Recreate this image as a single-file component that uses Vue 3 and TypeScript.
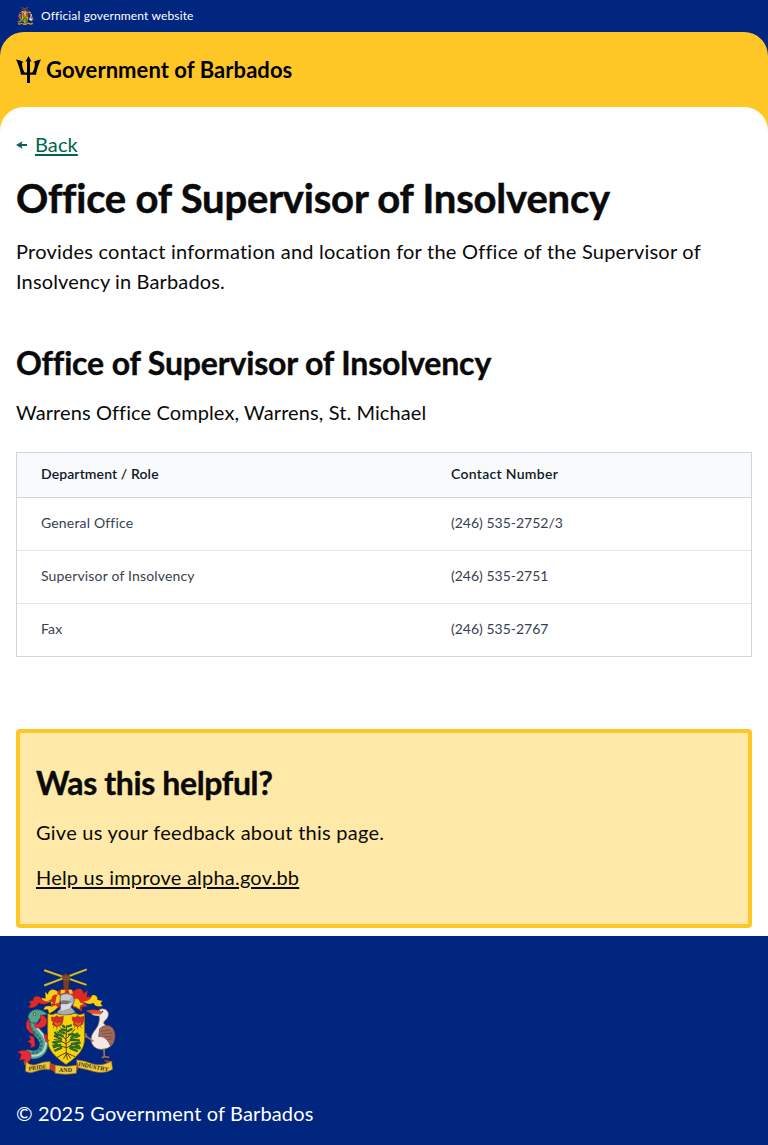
<script setup lang="ts">
interface Contact {
  role: string
  phone: string
}

const contacts: Contact[] = [
  { role: 'General Office', phone: '(246) 535-2752/3' },
  { role: 'Supervisor of Insolvency', phone: '(246) 535-2751' },
  { role: 'Fax', phone: '(246) 535-2767' },
]
</script>

<template>
  <div class="page">
    <div class="official">
      <svg class="arms-small" viewBox="24 24 302 324" aria-hidden="true"><use href="#arms" /></svg>
      <span class="official-text">Official government website</span>
    </div>

    <div class="brand-back">
      <header class="brand">
        <svg class="trident" viewBox="0 0 25 27" aria-hidden="true">
          <path d="M12.5 0 15.6 5.8 14 5.3V16.6H16.4C18.6 13 19.1 9 18.8 6.5L17.3 6.3C19.4 5 21.8 4.2 25 3.6 22.8 7.7 20.7 14.2 20 18.8H14V27H11V18.8H5C4.3 14.2 2.2 7.7 0 3.6 3.2 4.2 5.6 5 7.7 6.3L6.2 6.5C5.9 9 6.4 13 8.6 16.6H11V5.3L9.4 5.8Z" />
        </svg>
        <span class="brand-name">Government of Barbados</span>
      </header>
    </div>

    <div class="sheet-back">
      <main class="sheet">
        <nav class="back">
          <svg class="arrow" viewBox="0 0 12 8" aria-hidden="true">
            <path d="M0 4 6.4 .2 5.6 3H11V5H5.6L6.4 7.8Z" />
          </svg>
          <a class="back-link" href="#">Back</a>
        </nav>
        <h1>Office of Supervisor of Insolvency</h1>
        <p class="intro"><span class="line-a">Provides contact information and location for the Office of the Supervisor of</span><br /><span class="line-b">Insolvency in Barbados.</span></p>
        <h2 class="office">Office of Supervisor of Insolvency</h2>
        <p class="address">Warrens Office Complex, Warrens, St. Michael</p>
        <table>
          <thead>
            <tr>
              <th class="role">Department / Role</th>
              <th class="contact">Contact Number</th>
            </tr>
          </thead>
          <tbody>
            <tr v-for="c in contacts" :key="c.role">
              <td>{{ c.role }}</td>
              <td class="phone">{{ c.phone }}</td>
            </tr>
          </tbody>
        </table>
        <section class="feedback">
          <h2 class="helpful">Was this helpful?</h2>
          <p class="ask">Give us your feedback about this page.</p>
          <a class="improve" href="#">Help us improve alpha.gov.bb</a>
        </section>
      </main>
    </div>

    <footer>
      <svg class="arms-large" viewBox="24 24 302 324" role="img" aria-label="Coat of arms of Barbados">
        <g id="arms">
          <!-- crossed canes and hand -->
          <path d="M109 31 237 75M109 77 238 28" stroke="#e3bf1c" stroke-width="6" />
          <path d="M110 34 237 78M109 80 238 31" stroke="#806316" stroke-width="1" />
          <path d="M164 45q9-8 20 0l2 16-4 34h-15l-1-34z" fill="#70402a" stroke="#2d1c18" stroke-width="1.5" />
          <path d="M165 52h19M165 59h19" stroke="#a87047" stroke-width="2" />
          <!-- mantling, left side -->
          <g stroke="#6b3a12" stroke-width="0.8">
            <path d="M152 98C140 84 122 88 120 104L112 96 113 116 100 114C106 130 118 132 128 126L132 138 113 140 106 150 120 150 124 162 138 154 152 142 160 112Z" fill="#f8cf12" />
            <path d="M96 112C84 106 74 112 76 122L62 126C72 132 68 138 60 142 76 148 88 140 92 130 104 136 118 134 126 126 112 128 102 122 96 112Z" fill="#e32721" />
            <path d="M150 106C140 102 132 108 132 118L122 124 136 128 128 142 144 136 154 146 160 120Z" fill="#e32721" />
            <path d="M150 104C142 112 146 122 140 134L154 130 160 112Z" fill="#f8cf12" />
          </g>
          <!-- mantling, right side -->
          <g stroke="#6b3a12" stroke-width="0.8">
            <path d="M196 98C210 80 228 86 228 102L240 92 238 112 252 110C248 126 238 130 228 128L240 140 222 142 224 156 208 146 196 142 190 112Z" fill="#e32721" />
            <path d="M254 106C266 104 272 112 270 120L286 124C278 130 280 134 286 138 274 144 262 140 258 130 246 136 234 132 226 124 240 126 250 120 254 106Z" fill="#f8cf12" />
            <path d="M200 118C208 114 216 118 218 128L230 132 218 138 216 150 206 142 196 138Z" fill="#f8cf12" />
          </g>
          <path d="M152 92q11-6 22-2 12-4 24 2l4 10-14 5-14-5-14 5-12-5z" fill="#df241c" />
          <path d="M160 90l-2 13 12-3 4-9zM182 90l4 13 10-2-4-11z" fill="#f8cf12" />
          <!-- shield -->
          <path d="M120 162q13 7 25-1 14 7 29 0 15 7 28 0 13 8 29 1v81q0 37-56 73-56-36-56-73z" fill="#f9d20c" stroke="#846b10" stroke-width="2" />
          <!-- helmet -->
          <path d="M158 106q20-11 38 1l5 15q-2 12-12 19l15 17q-15 10-36 8-19-1-20-9 15-12 15-23-9-14-5-28z" fill="#a9adb2" stroke="#53585e" stroke-width="2" />
          <path d="M160 109q17-8 34 1l-9 11h-25z" fill="#c4c7ca" />
          <path d="M158 134l33-4 8-9-12 26-27 9z" fill="#d9dbdd" stroke="#747980" />
          <path d="M163 122l26 3-10 9-16-2z" fill="#71777d" />
          <!-- pride of Barbados flowers -->
          <g id="flower" stroke="#8f351b" stroke-width="1.5">
            <path d="M131 172l10 1 6-5 7 5 13-3-1 13-4 12-15 7-13-6 2-9-5-4z" fill="#d62c20" />
            <path d="M136 190l8-4 5 5 7-6 4 7-11 10zM139 178l7 2 7-2-7 6z" fill="#f05a28" />
            <path d="M147 199v12M139 199l-3 8M155 199l4 7" fill="none" stroke="#6f5b18" stroke-width="2" />
          </g>
          <use href="#flower" x="63" />
          <!-- bearded fig tree -->
          <g fill="none" stroke-linecap="round">
            <path d="M177 199q-4 40-1 87M177 244l-18-22-11-5M177 255l-23-13-15-1M177 265l-21-5-18 6M177 237l16-17 8-10M178 252l19-15 15-4M178 265l18-10 20 3M175 225l-11-15" stroke="#4a4414" stroke-width="3" />
            <path d="M176 280l-16 8-12 7M176 284l-8 14M176 283l3 18M177 281l12 16M177 281l17 8 8 3" stroke="#594414" stroke-width="3" />
            <path d="M171 203l-7-5M181 201l9-3M174 212l-12-2M181 215l11-6M168 222l-12-8M184 226l14-2M165 231l-18-7M191 235l18-12M160 239l-19-9M189 242l25 1M160 246l-24 3M192 254l25-4M158 258l-21 1M189 261l27 6M160 266l-18 8M188 267l20 8M149 229l-7-9M202 228l13 1M147 252l-9 11M205 257l12 9" stroke="#276b25" stroke-width="7" stroke-dasharray="7 2" />
          </g>
          <!-- dolphin -->
          <g fill="none" stroke-linecap="round">
            <path d="M78 172C52 210 110 222 108 254 107 284 82 292 60 284" stroke="#245f5b" stroke-width="27" />
            <path d="M78 172C52 210 110 222 108 254 107 284 82 292 60 284" stroke="#55a393" stroke-width="23" />
            <path d="M84 178C70 208 118 220 114 256 110 284 88 294 66 288" stroke="#c3d6d0" stroke-width="6" />
            <path d="M72 176C46 210 102 224 101 254 100 276 84 284 66 280" stroke="#2d7775" stroke-width="9" stroke-dasharray="1 11" />
          </g>
          <path d="M60 172Q64 152 84 150 104 148 118 164 112 168 104 166L112 178 96 176 88 190 68 190Z" fill="#55a393" stroke="#244f4b" stroke-width="2" />
          <g fill="#e52b35" stroke="#8a1824" stroke-width="1.5">
            <path d="M98 166l12 4 8 12-4 16-14 8-18-2-4-14 10 4 10-12z" />
            <path d="M62 178q-12 12-6 30l10 12 14 6-12-20zM78 234l-14-6 4 14-10 4 12 8-2 12 14-6zM108 228l12-4-4 12 8 8-10 4z" />
            <path d="M68 282q-12-12-26-8l-14 4 12 8-6 18 14-4 6 16q20-14 14-34z" />
          </g>
          <circle cx="80" cy="164" r="4" fill="#f6db4b" stroke="#222" stroke-width="2" />
          <!-- pelican -->
          <path d="M273 153c7-8 24-7 29 4 5 13-4 22-11 28-5 7 1 11 10 15 19 10 24 25 21 38-3 18-15 29-33 32-20 3-38-8-38-30 0-20 17-30 22-46 2-8 5-16 2-24z" fill="#f2e8e4" stroke="#776b69" stroke-width="2" />
          <path d="M239 153q18-5 38 0l7 7-9 6q-21-1-39-12z" fill="#ea4c28" stroke="#963821" stroke-width="1.5" />
          <path d="M250 162q14 12 31 5l-4-4z" fill="#d7bd97" />
          <path d="M277 208c15-15 36-12 43 4 7 17 0 33-10 49-8-22-22-32-36-29z" fill="#a46b58" stroke="#6b4138" stroke-width="2" />
          <path d="M280 216l28-4M283 224l33-3M291 232l25-1M300 241l14-3" stroke="#704333" stroke-width="2" />
          <path d="M258 246l-20-14-4-10M238 232l-8 0M290 268l1 24M283 296l9-4 14 3" stroke="#a67257" stroke-width="5" fill="none" />
          <circle cx="285" cy="156" r="2.5" fill="#151515" />
          <!-- motto ribbon -->
          <path d="M46 304l14 2-2 14-10-4zM124 310l20 8v24l-20-13zM206 308l12 3-10 26zM289 302l24 4-4 14z" fill="#b83f22" />
          <g fill="#efc93b" stroke="#8b681d" stroke-width="2">
            <path d="M54 308q15 15 34 7 17-8 39-8l-1 24q-22-3-42 6-18 8-32 0z" />
            <path d="M207 302q25 3 48 12 26 9 58-8l3 25q-24 14-55 7-25-8-49-12z" />
            <path d="M142 318q33 8 66 0l-2 25q-32 6-64 0z" />
          </g>
          <g class="motto" fill="#39321a">
            <text x="62" y="335" transform="rotate(-8 62 335)">PRIDE</text>
            <text x="154" y="340">AND</text>
            <text x="211" y="320" transform="rotate(11 211 320)">INDUSTRY</text>
          </g>
        </g>
      </svg>
      <p class="copyright">© 2025 Government of Barbados</p>
    </footer>
  </div>
</template>

<style>
body {
  margin: 0;
  background: #fff;
}
</style>

<style scoped>
.page {
  font-family: Lato, "Open Sans", sans-serif;
  font-size: 20px;
  line-height: 30px;
  color: #0a0a0a;
  white-space: nowrap;
  font-variant-ligatures: none;
}
.motto {
  font: bold 18px "Liberation Serif", serif;
}
h1,
h2,
p {
  margin: 0;
}
.official {
  display: flex;
  align-items: center;
  gap: 7px;
  height: 32px;
  padding-left: 16px;
  background: #00267f;
  color: #fff;
}
.arms-small {
  width: 18px;
  height: 18px;
}
.official-text {
  font-size: 12px;
  line-height: 16px;
  letter-spacing: 0.15px;
}
.brand-back {
  background: #00267f;
}
.brand {
  display: flex;
  align-items: center;
  gap: 5px;
  height: 75px;
  padding-left: 16px;
  background: #ffc726;
  border-radius: 24px 24px 0 0;
}
.trident {
  width: 25px;
  height: 27px;
  fill: #000;
}
.brand-name {
  font-size: 22px;
  font-weight: 700;
  letter-spacing: 0.06px;
  color: #000;
}
.sheet-back {
  background: #ffc726;
}
.sheet {
  box-sizing: border-box;
  height: 829px;
  padding: 22px 16px 0;
  background: #fff;
  border-radius: 24px 24px 0 0;
}
.back {
  display: flex;
  align-items: center;
  gap: 7px;
  color: #00654a;
}
.arrow {
  width: 12px;
  height: 8px;
  margin-top: 1px;
  fill: #0e5f64;
}
.back-link {
  color: inherit;
  letter-spacing: 0.1px;
  text-underline-offset: 2px;
  text-decoration-thickness: 2px;
}
h1 {
  margin-top: 16px;
  font-size: 40px;
  line-height: 46px;
  letter-spacing: -0.2px;
  -webkit-text-stroke: 0.5px #0a0a0a;
}
.intro {
  margin-top: 15px;
}
.line-a {
  letter-spacing: 0.23px;
}
.line-b {
  letter-spacing: 0.14px;
}
h2 {
  font-size: 32px;
  line-height: 40px;
  -webkit-text-stroke: 0.4px #0a0a0a;
}
.office {
  margin-top: 47px;
  letter-spacing: -0.16px;
}
.address {
  margin-top: 14px;
  letter-spacing: 0.1px;
}
table {
  width: 736px;
  margin-top: 25px;
  border: 1px solid #d1d5db;
  border-spacing: 0;
  table-layout: fixed;
  font-size: 14px;
  line-height: 20px;
  color: #374151;
}
th,
td {
  box-sizing: border-box;
  padding: 0 24px 2px;
  text-align: left;
  letter-spacing: 0.17px;
}
th {
  height: 45px;
  background: #f9fafb;
  border-bottom: 1px solid #d1d5db;
  font-weight: 600;
  color: #111827;
}
.role {
  width: 410px;
  letter-spacing: 0.11px;
}
.contact {
  letter-spacing: 0.3px;
}
td {
  height: 53px;
  border-bottom: 1px solid #e5e7eb;
}
.phone {
  letter-spacing: 0;
}
tbody tr:last-child td {
  height: 52px;
  border-bottom: 0;
}
.feedback {
  box-sizing: border-box;
  height: 199px;
  margin-top: 72px;
  padding: 30px 16px 0;
  border: 4px solid #ffc726;
  border-radius: 4px;
  background: #ffe9a8;
}
.helpful {
  letter-spacing: -0.37px;
}
.ask {
  margin-top: 14px;
  letter-spacing: 0.26px;
}
.improve {
  display: inline-block;
  margin-top: 15px;
  color: inherit;
  letter-spacing: 0.21px;
  text-underline-offset: 2px;
  text-decoration-thickness: 2px;
}
footer {
  box-sizing: border-box;
  height: 209px;
  padding: 32px 16px 0;
  background: #00267f;
  color: #fff;
}
.arms-large {
  display: block;
  width: 100px;
  height: 107px;
}
.copyright {
  margin-top: 23px;
  letter-spacing: 0.14px;
}
</style>
